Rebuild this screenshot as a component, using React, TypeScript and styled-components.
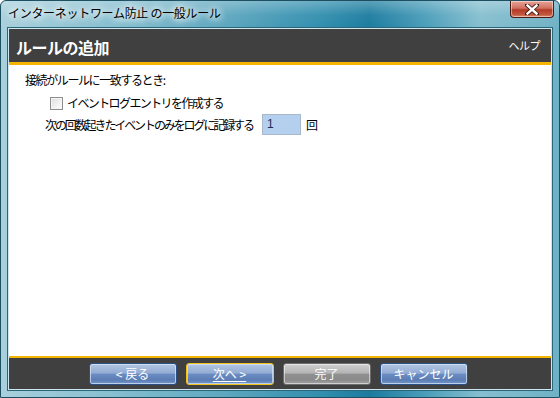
import React from "react";
import styled, { createGlobalStyle } from "styled-components";

const Global = createGlobalStyle`
  html, body { margin: 0; padding: 0; }
  body {
    width: 560px; height: 398px; overflow: hidden;
    font-family: "Noto Sans CJK JP", "Noto Sans", sans-serif;
    background: #fff;
  }
`;

const Win = styled.div`
  width: 560px;
  height: 398px;
  box-sizing: border-box;
  display: flex;
  flex-direction: column;
  border: 1px solid #1d4f60;
  border-radius: 6px 6px 0 0;
  background:
    linear-gradient(180deg, rgba(255,255,255,0.28) 0px, rgba(255,255,255,0.05) 14px, rgba(0,0,0,0) 28px),
    linear-gradient(90deg, #a9d0dc 0%, #86bfd0 20%, #5ea7bf 40%, #2f8dad 58%, #1b7b9f 66%, #4a9db9 76%, #86bfcf 86%, #6fb1c5 100%);
  padding: 0 7px 7px 7px;
`;

const TitleBar = styled.div`
  height: 27px;
  display: flex;
  align-items: flex-start;
  flex: none;
`;

const TitleText = styled.div`
  margin-top: 4px;
  font-size: 12px;
  line-height: 16px;
  color: #000;
  text-shadow: 0 0 6px #fff, 0 0 8px #fff, 0 0 10px rgba(255,255,255,0.9);
  letter-spacing: -0.3px;
`;

const CloseBtn = styled.div`
  margin-left: auto;
  margin-right: -2px;
  width: 44px;
  height: 17px;
  box-sizing: border-box;
  border: 1px solid #4d1a14;
  border-top: none;
  border-radius: 0 0 4px 4px;
  background: linear-gradient(180deg, #e7a496 0%, #d0705f 45%, #b23a26 55%, #c4583f 85%, #d98a72 100%);
  box-shadow: inset 0 0 0 1px rgba(255,255,255,0.45);
  display: flex;
  align-items: center;
  justify-content: center;
`;

const Client = styled.div`
  flex: 1;
  display: flex;
  flex-direction: column;
  border: 1px solid #cfe6ee;
  outline: 1px solid #2a6677;
  background: #404040;
`;

const Header = styled.div`
  height: 33px;
  flex: none;
  display: flex;
  align-items: center;
  justify-content: space-between;
  padding: 0 11px 0 7px;
  border-bottom: 3px solid #f5b400;
`;

const HeaderTitle = styled.div`
  font-size: 16px;
  font-weight: bold;
  color: #fff;
  letter-spacing: -0.5px;
  margin-top: 2px;
`;

const HelpLink = styled.div`
  font-size: 11px;
  color: #fff;
  margin-top: -2px;
  letter-spacing: -0.5px;
`;

const Content = styled.div`
  flex: 1;
  background: #fff;
  padding: 7px 16px;
  display: flex;
  flex-direction: column;
  font-size: 12px;
  color: #000;
  border-bottom: 2px solid #f5b400;
`;

const Text = styled.span<{ $ls?: number }>`
  font-size: 12px;
  line-height: 16px;
  letter-spacing: ${(p) => (p.$ls ?? -1.6)}px;
`;

const Row = styled.div<{ $indent: number; $mt: number }>`
  display: flex;
  align-items: center;
  margin-left: ${(p) => p.$indent}px;
  margin-top: ${(p) => p.$mt}px;
`;

const Check = styled.span`
  width: 13px;
  height: 13px;
  box-sizing: border-box;
  border: 1px solid #8f8f8f;
  background: linear-gradient(135deg, #dcdcdc 0%, #f2f2f2 60%, #fff 100%);
  box-shadow: inset 0 0 0 1px #f4f4f4;
  margin-right: 4px;
  flex: none;
`;

const NumBox = styled.div`
  width: 39px;
  height: 21px;
  box-sizing: border-box;
  border: 1px solid #a7b8cb;
  background: #b4d0ee;
  font-family: "Liberation Sans", Arial, sans-serif;
  font-size: 12px;
  line-height: 19px;
  padding-left: 4px;
  color: #1a2a50;
  margin-left: 9px;
  margin-right: 5px;
`;

const Footer = styled.div`
  height: 31px;
  flex: none;
  display: flex;
  align-items: center;
  justify-content: center;
  gap: 9px;
  padding-right: 4px;
`;

const Btn = styled.div<{ $kind: "blue" | "default" | "disabled" }>`
  width: 88px;
  height: 22px;
  box-sizing: border-box;
  border-radius: 3px;
  display: flex;
  align-items: center;
  justify-content: center;
  font-size: 12px;
  color: #fff;
  border: 1px solid
    ${(p) => (p.$kind === "default" ? "#f2c21c" : p.$kind === "disabled" ? "#6c6c6c" : "#2c4f86")};
  background: ${(p) =>
    p.$kind === "disabled"
      ? "linear-gradient(180deg, #d0d0d0 0%, #b4b4b4 45%, #909090 52%, #8a8a8a 80%, #a4a4a4 100%)"
      : "linear-gradient(180deg, #b2c6e2 0%, #93acd4 45%, #6a8cc2 52%, #5b7db4 80%, #7498cc 100%)"};
  box-shadow: inset 0 0 0 1px
    ${(p) => (p.$kind === "disabled" ? "rgba(255,255,255,0.5)" : "rgba(220,232,250,0.7)")};
`;

const BtnLabel = styled.span<{ $underline?: boolean }>`
  text-decoration: ${(p) => (p.$underline ? "underline" : "none")};
  text-underline-offset: 2px;
  white-space: pre;
`;

export default function App() {
  return (
    <>
      <Global />
      <Win>
        <TitleBar>
          <TitleText>インターネットワーム防止 の一般ルール</TitleText>
          <CloseBtn>
            <svg width="14" height="11" viewBox="0 0 14 11">
              <path
                d="M2 1 L12 10 M12 1 L2 10"
                stroke="#3a1a14"
                strokeWidth="4"
                strokeLinecap="square"
              />
              <path
                d="M2.5 1.5 L11.5 9.5 M11.5 1.5 L2.5 9.5"
                stroke="#fff"
                strokeWidth="2.4"
                strokeLinecap="square"
              />
            </svg>
          </CloseBtn>
        </TitleBar>
        <Client>
          <Header>
            <HeaderTitle>ルールの追加</HeaderTitle>
            <HelpLink>ヘルプ</HelpLink>
          </Header>
          <Content>
            <Row $indent={0} $mt={0}>
              <Text $ls={-1.4}>接続がルールに一致するとき:</Text>
            </Row>
            <Row $indent={25} $mt={7}>
              <Check />
              <Text>イベントログエントリを作成する</Text>
            </Row>
            <Row $indent={20} $mt={3}>
              <Text $ls={-2.1}>次の回数起きたイベントのみをログに記録する</Text>
              <NumBox>1</NumBox>
              <Text>回</Text>
            </Row>
          </Content>
          <Footer>
            <Btn $kind="blue">
              <BtnLabel>&lt; 戻る</BtnLabel>
            </Btn>
            <Btn $kind="default">
              <BtnLabel $underline>次へ &gt;</BtnLabel>
            </Btn>
            <Btn $kind="disabled">
              <BtnLabel>完了</BtnLabel>
            </Btn>
            <Btn $kind="blue">
              <BtnLabel>キャンセル</BtnLabel>
            </Btn>
          </Footer>
        </Client>
      </Win>
    </>
  );
}
